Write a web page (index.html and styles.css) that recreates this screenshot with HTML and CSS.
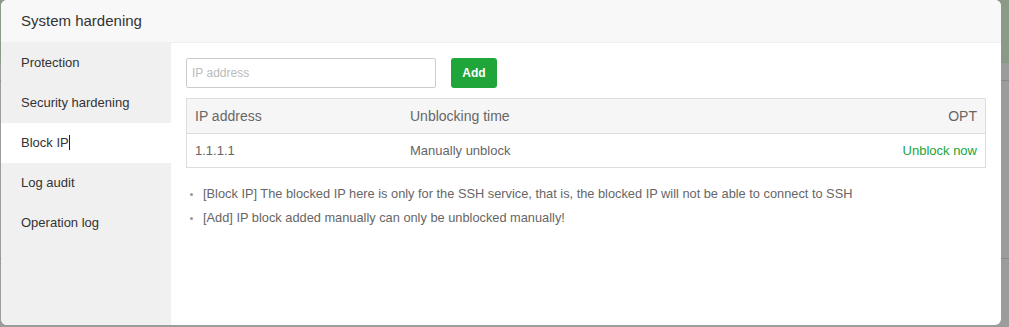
FILE: index.html
```html
<!DOCTYPE html>
<html lang="en">
<head>
    <meta charset="UTF-8">
    <title>System hardening</title>
    <link rel="stylesheet" href="styles.css">
</head>
<body>
    <div class="layer">
        <div class="layer-title">System hardening</div>
        <div class="layer-body">
            <!-- Left menu -->
            <ul class="side-menu">
                <li>Protection</li>
                <li>Security hardening</li>
                <li class="active">Block IP<span class="caret"></span></li>
                <li>Log audit</li>
                <li>Operation log</li>
            </ul>

            <!-- Block IP panel -->
            <div class="panel">
                <div class="toolbar">
                    <input type="text" class="ip-input" placeholder="IP address">
                    <button class="btn-add">Add</button>
                </div>

                <table class="ip-table">
                    <thead>
                        <tr>
                            <th class="col-ip">IP address</th>
                            <th>Unblocking time</th>
                            <th class="col-opt">OPT</th>
                        </tr>
                    </thead>
                    <tbody>
                        <tr>
                            <td>1.1.1.1</td>
                            <td>Manually unblock</td>
                            <td class="col-opt"><a href="#">Unblock now</a></td>
                        </tr>
                    </tbody>
                </table>

                <ul class="help">
                    <li>[Block IP] The blocked IP here is only for the SSH service, that is, the blocked IP will not be able to connect to SSH</li>
                    <li>[Add] IP block added manually can only be unblocked manually!</li>
                </ul>
            </div>
        </div>
    </div>
</body>
</html>
```

FILE: styles.css
```css
/* Page behind the dialog (dimmed) */
body {
    margin: 0;
    height: 327px;
    font-family: 'Liberation Sans', Arial, sans-serif;
    background:
        linear-gradient(#8a9a87 0, #8a9a87 63px, transparent 63px),
        linear-gradient(transparent 80px, #888 80px, #888 81px, transparent 81px),
        linear-gradient(transparent 258px, #888 258px, #888 259px, transparent 259px),
        #9c9c9c;
    overflow: hidden;
}

/* Dialog */
.layer {
    width: 1000px;
    height: 325px;
    margin-left: 1px;
    background: #fff;
    border-radius: 6px;
    overflow: hidden;
    display: flex;
    flex-direction: column;
}

.layer-title {
    height: 42px;
    line-height: 42px;
    padding-left: 20px;
    font-size: 15px;
    color: #333;
    background: #f8f8f8;
    border-bottom: 1px solid #eee;
    flex-shrink: 0;
}

.layer-body {
    flex: 1;
    display: flex;
}

/* Left menu */
.side-menu {
    width: 170px;
    margin: 0;
    padding: 0;
    list-style: none;
    background: #f0f0f0;
}

.side-menu li {
    height: 40px;
    line-height: 40px;
    padding-left: 20px;
    font-size: 13px;
    color: #333;
}

.side-menu li.active {
    background: #fff;
}

.caret {
    display: inline-block;
    width: 1px;
    height: 15px;
    background: #222;
    vertical-align: -3px;
}

/* Right panel */
.panel {
    flex: 1;
    padding: 15px 15px 0 15px;
}

.toolbar {
    display: flex;
    gap: 15px;
    margin-bottom: 10px;
}

.ip-input {
    width: 250px;
    height: 30px;
    box-sizing: border-box;
    padding: 0 5px;
    border: 1px solid #ccc;
    border-radius: 2px;
    font-family: inherit;
    font-size: 12px;
    color: #555;
}

.ip-input::placeholder {
    color: #bbb;
}

.btn-add {
    width: 46px;
    height: 30px;
    border: none;
    border-radius: 3px;
    background: #20a53a;
    color: #fff;
    font-family: inherit;
    font-size: 12px;
    font-weight: bold;
    padding: 0;
}

/* Table */
.ip-table {
    width: 800px;
    border-collapse: collapse;
    border: 1px solid #ddd;
    font-size: 13px;
    color: #666;
}

.ip-table th {
    height: 34px;
    padding: 0 8px;
    background: #f6f6f6;
    font-weight: normal;
    text-align: left;
    border-bottom: 1px solid #ddd;
    font-size: 14px;
}

.ip-table td {
    height: 33px;
    padding: 0 8px;
}

.ip-table .col-ip {
    width: 199px;
}

.ip-table .col-opt {
    text-align: right;
}

.ip-table a {
    color: #20a53a;
    text-decoration: none;
}

/* Help notes */
.help {
    margin: 14px 0 0 0;
    padding-left: 17px;
    font-size: 12.8px;
    color: #666;
    line-height: 24px;
}

.help li::marker {
    color: #999;
    font-size: 10px;
}
```
